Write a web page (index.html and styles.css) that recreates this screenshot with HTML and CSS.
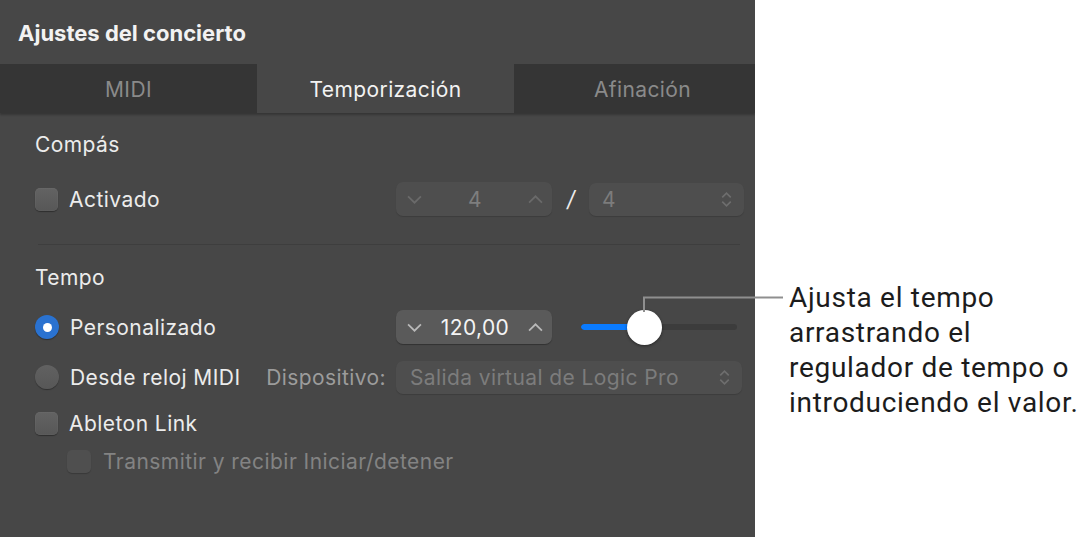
FILE: index.html
```html
<!DOCTYPE html>
<html lang="es">
<head>
<meta charset="utf-8">
<title>Ajustes del concierto</title>
<link rel="stylesheet" href="styles.css">
</head>
<body>
<div class="page">
  <section class="panel">
    <header class="title">Ajustes del concierto</header>
    <nav class="tabs">
      <div class="tab">MIDI</div>
      <div class="tab active">Temporización</div>
      <div class="tab">Afinación</div>
    </nav>
    <div class="content">
      <h2 class="heading h-compas">Compás</h2>
      <div class="row r-activado">
        <div class="left">
          <span class="check"></span><span class="label">Activado</span>
        </div>
        <div class="controls">
          <div class="stepper disabled">
            <svg class="chev" viewBox="0 0 14 8"><path d="M1 1 L7 7 L13 1"/></svg>
            <span class="val">4</span>
            <svg class="chev" viewBox="0 0 14 8"><path d="M1 7 L7 1 L13 7"/></svg>
          </div>
          <span class="slash">/</span>
          <div class="popup disabled small">
            <span class="val">4</span>
            <svg class="updown" viewBox="0 0 10 16"><path d="M1 6 L5 2 L9 6 M1 10 L5 14 L9 10"/></svg>
          </div>
        </div>
      </div>
      <div class="sep"></div>
      <h2 class="heading h-tempo">Tempo</h2>
      <div class="row r-pers">
        <div class="left">
          <span class="radio on"></span><span class="label">Personalizado</span>
        </div>
        <div class="controls">
          <div class="stepper">
            <svg class="chev" viewBox="0 0 14 8"><path d="M1 1 L7 7 L13 1"/></svg>
            <span class="val">120,00</span>
            <svg class="chev" viewBox="0 0 14 8"><path d="M1 7 L7 1 L13 7"/></svg>
          </div>
          <div class="slider">
            <div class="track"><div class="fill" style="width:63px"></div></div>
            <div class="thumb" style="left:63px"></div>
          </div>
        </div>
      </div>
      <div class="row r-desde">
        <div class="left">
          <span class="radio"></span><span class="label">Desde reloj MIDI</span>
          <span class="sublabel">Dispositivo:</span>
        </div>
        <div class="controls">
          <div class="popup disabled wide">
            <span class="val">Salida virtual de Logic Pro</span>
            <svg class="updown" viewBox="0 0 10 16"><path d="M1 6 L5 2 L9 6 M1 10 L5 14 L9 10"/></svg>
          </div>
        </div>
      </div>
      <div class="row r-ableton">
        <div class="left">
          <span class="check"></span><span class="label">Ableton Link</span>
        </div>
      </div>
      <div class="row r-trans">
        <div class="left indent">
          <span class="check dis"></span><span class="label dim">Transmitir y recibir Iniciar/detener</span>
        </div>
      </div>
    </div>
  </section>
  <aside class="callout">
    <p>Ajusta el tempo<br>arrastrando el<br>regulador de tempo o<br>introduciendo el valor.</p>
  </aside>
  <svg class="leader" width="1091" height="540" viewBox="0 0 1091 540"><path d="M644 312 V297.5 H783"/></svg>
</div>
</body>
</html>
```
FILE: styles.css
```css
* { box-sizing: border-box; }
html, body { margin: 0; padding: 0; background: #fff; }
body { font-family: Inter, "Noto Sans", "Liberation Sans", sans-serif; }
.page { position: relative; display: flex; width: 1091px; height: 540px; }

.panel {
  width: 755px;
  height: 537px;
  background: #474747;
  color: #e9e9e9;
  display: flex;
  flex-direction: column;
  overflow: hidden;
  flex: none;
}
.title {
  height: 64px;
  padding: 19px 0 0 18px;
  font-size: 22px;
  line-height: 28px;
  font-weight: 700;
  color: #f2f2f2;
}
.tabs {
  display: flex;
  height: 49px;
  background: #353535;
  box-shadow: 0 2px 2px rgba(0,0,0,0.25);
  position: relative;
  z-index: 1;
}
.tab {
  width: 257px;
  flex: none;
  display: flex;
  align-items: center;
  justify-content: center;
  font-size: 21px;
  letter-spacing: 0.4px;
  color: #8a8a8a;
  padding-top: 1px;
}
.tab.active { background: #474747; color: #f2f2f2; }

.content { padding: 0 13px 0 35px; display: flex; flex-direction: column; }
.heading { margin: 0; font-size: 21px; letter-spacing: 0.4px; font-weight: 400; height: 24px; line-height: 24px; color: #ececec; }
.h-compas { margin-top: 20px; }
.h-tempo { margin-top: 21px; }
.sep { height: 1px; background: #3e3e3e; margin: 27px 2px 0 3px; }

.row { display: flex; align-items: center; height: 36px; }
.r-activado { margin-top: 24px; }
.r-pers { margin-top: 19px; }
.r-desde { margin-top: 14px; }
.r-ableton { margin-top: 10px; }
.r-trans { margin-top: 2px; }

.left { width: 361px; flex: none; display: flex; align-items: center; height: 100%; white-space: nowrap; }
.left.indent { padding-left: 32px; }
.label { font-size: 21px; letter-spacing: 0.45px; margin-left: 11px; color: #ececec; }
.label.dim { color: #838383; margin-left: 12px; }
.sublabel { margin-left: auto; margin-right: 10px; font-size: 21px; letter-spacing: 0.4px; color: #9c9c9c; }

.check {
  width: 23px; height: 23px; border-radius: 5px;
  background: linear-gradient(#636363, #575757);
  box-shadow: 0 1px 1px rgba(0,0,0,0.35), inset 0 0 0 0.5px rgba(255,255,255,0.06);
  flex: none;
}
.check.dis { width: 24px; background: #4f4f4f; box-shadow: 0 1px 1px rgba(0,0,0,0.2); }
.radio {
  width: 24px; height: 24px; border-radius: 50%;
  background: linear-gradient(#616161, #575757);
  box-shadow: 0 1px 1px rgba(0,0,0,0.35);
  flex: none; position: relative;
}
.radio.on { background: #2a72d0; }
.radio.on::after {
  content: ""; position: absolute; left: 7.5px; top: 7.5px;
  width: 9px; height: 9px; border-radius: 50%; background: #fff;
}

.controls { display: flex; align-items: center; height: 100%; }
.stepper {
  width: 156px; height: 34px; border-radius: 7px;
  background: #5a5a5a;
  box-shadow: 0 1px 1px rgba(0,0,0,0.3);
  display: flex; align-items: center; justify-content: space-between;
  padding: 0 9px 0 11px;
  font-size: 21px; letter-spacing: 0.4px; color: #f4f4f4;
}
.stepper .chev { width: 15px; height: 9px; fill: none; stroke: #b9b9b9; stroke-width: 1.6; }
.stepper.disabled { background: #4e4e4e; color: #7e7e7e; box-shadow: 0 1px 1px rgba(0,0,0,0.15); }
.stepper.disabled .chev { stroke: #6a6a6a; }
.slash { font-size: 22px; color: #ececec; margin: 0 14px 0 15px; font-style: italic; }

.popup {
  height: 33px; border-radius: 7px; background: #4e4e4e;
  box-shadow: 0 1px 1px rgba(0,0,0,0.15);
  display: flex; align-items: center; justify-content: space-between;
  padding: 0 12px 0 13px;
  font-size: 21px; letter-spacing: 0.4px; color: #7c7c7c;
  white-space: nowrap;
}
.popup.small { width: 155px; }
.popup.wide { width: 346px; padding-left: 14px; }
.popup .updown { width: 11px; height: 17px; fill: none; stroke: #6e6e6e; stroke-width: 1.5; flex: none; }

.slider { position: relative; width: 156px; height: 36px; margin-left: 29px; display: flex; align-items: center; }
.track { width: 100%; height: 6px; border-radius: 3px; background: #3c3c3c; position: relative; overflow: hidden; }
.fill { height: 100%; background: #0a7bff; border-radius: 3px 0 0 3px; }
.thumb {
  position: absolute; top: 1px; width: 35px; height: 35px; margin-left: -17.5px;
  border-radius: 50%; background: #fff;
  box-shadow: 0 1px 3px rgba(0,0,0,0.45);
}

.callout { flex: 1; padding: 280px 0 0 34px; }
.callout p {
  margin: 0; font-family: Roboto, "Liberation Sans", sans-serif;
  font-size: 28px; letter-spacing: 0.7px; line-height: 35px; color: #1c1c1c;
  white-space: nowrap;
}
.leader { position: absolute; left: 0; top: 0; pointer-events: none; }
.leader path { fill: none; stroke: #8f8f8f; stroke-width: 2; }
```
